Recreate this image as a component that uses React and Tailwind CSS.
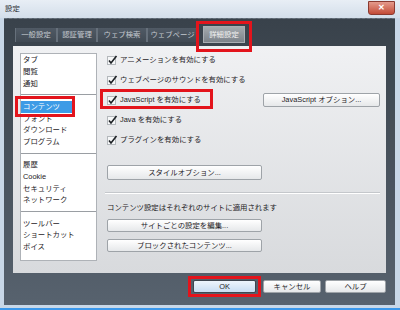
const font = "font-['Liberation_Sans','Noto_Sans_CJK_JP',sans-serif]";

const listGroups = [
  ['タブ', '閲覧', '通知'],
  ['コンテンツ', 'フォント', 'ダウンロード', 'プログラム'],
  ['履歴', 'Cookie', 'セキュリティ', 'ネットワーク'],
  ['ツールバー', 'ショートカット', 'ボイス'],
];

const checks = [
  'アニメーションを有効にする',
  'ウェブページのサウンドを有効にする',
  'JavaScript を有効にする',
  'Java を有効にする',
  'プラグインを有効にする',
];

function Check() {
  return (
    <svg width="11" height="10" viewBox="0 0 11 10" className="shrink-0">
      <rect x="0.5" y="1.5" width="8" height="8" fill="#f6f7f8" stroke="#b4b8bc" />
      <path d="M2 5.5 L4 8 L9.5 1" fill="none" stroke="#1e2226" strokeWidth="1.6" />
    </svg>
  );
}

function Btn({ children, className = '' }) {
  return (
    <div
      className={`flex items-center justify-center rounded-[2px] border border-[#9ea3a8] bg-gradient-to-b from-[#ffffff] to-[#e6e8ea] text-[#1e2226] ${className}`}
    >
      {children}
    </div>
  );
}

function Tab({ label, className }) {
  return (
    <div
      className={`flex h-[14px] items-center justify-center border-x border-[#66707b] bg-gradient-to-b from-[#505a65] to-[#414a54] text-[#c3c8ce] ${className}`}
    >
      {label}
    </div>
  );
}

export default function App() {
  return (
    <div className={`relative flex h-[310px] w-[400px] flex-col overflow-hidden bg-[#c8d7e7] text-[7.4px] leading-none ${font}`}>
      {/* title bar */}
      <div className="flex h-[18px] items-start bg-gradient-to-b from-[#e8eef5] to-[#d3deea]">
        <span className="mt-[5px] ml-[5px] text-[#2a2e33]">設定</span>
        <div className="ml-auto mr-[5px] mt-[1px] flex h-[14px] w-[27px] items-center justify-center rounded-b-[3px] border border-[#8a3a30] bg-gradient-to-b from-[#e49a8c] to-[#c24a36] text-[8px] font-bold text-white">
          ✕
        </div>
      </div>

      {/* dark body */}
      <div className="ml-[4px] mr-[5px] flex h-[287px] flex-col border-t border-dashed border-[#6a747e] bg-gradient-to-b from-[#39424b] to-[#57626e] px-[9px]">
        {/* tabs */}
        <div className="flex h-[27px] items-end pb-[3px] pl-[2px]">
          <Tab label="一般設定" className="mb-[1px] w-[42px]" />
          <Tab label="認証管理" className="mb-[1px] w-[40px]" />
          <Tab label="ウェブ検索" className="mb-[1px] w-[50px]" />
          <Tab label="ウェブページ" className="mb-[1px] w-[51px]" />
          <div className="ml-[5px] flex h-[17px] w-[42px] items-center justify-center border border-[#a9aeb3] bg-gradient-to-b from-[#a4a9ae] to-[#7c838a] text-[#f2f2f2]">
            詳細設定
          </div>
        </div>

        {/* panel */}
        <div className="flex h-[227px] gap-[8px] bg-gradient-to-b from-[#f0f1f3] to-[#d8dadd] pl-[7px] pr-[6px]">
          <div className="mt-[7px] h-[208px] w-[77px] border border-[#aeb2b7] bg-white">
            {listGroups.map((group, gi) => (
              <div key={gi}>
                {gi > 0 && (
                  <div className="flex h-[11.7px] items-center">
                    <div className="h-px w-full bg-[#9a9ea3]" />
                  </div>
                )}
                {group.map((item) => (
                  <div key={item} className="flex h-[11.7px] items-center">
                    {item === 'コンテンツ' ? (
                      <div className="flex h-[12px] w-[52px] items-center bg-[#3d9be6] pl-[2px] text-white">{item}</div>
                    ) : (
                      <span className="pl-[2px] text-[#1e2226]">{item}</span>
                    )}
                  </div>
                ))}
              </div>
            ))}
          </div>

          <div className="flex flex-1 flex-col pt-[4px]">
            {checks.map((c, i) => (
              <div key={c} className="flex h-[20px] items-center pl-[2px] text-[#1e2226]">
                <Check />
                <span className="ml-[2px]">{c}</span>
                {i === 2 && <Btn className="ml-auto h-[14px] w-[117px]">JavaScript オプション...</Btn>}
              </div>
            ))}
            <Btn className="ml-[2px] mt-[15px] h-[15px] w-[155px]">スタイルオプション...</Btn>
            <div className="mt-[12px] h-px bg-[#c4c7cb]" />
            <div className="h-px bg-white" />
            <span className="ml-[2px] mt-[10px] text-[#1e2226]">コンテンツ設定はそれぞれのサイトに適用されます</span>
            <Btn className="ml-[2px] mt-[8px] h-[13px] w-[155px]">サイトごとの設定を編集...</Btn>
            <Btn className="ml-[2px] mt-[7px] h-[13px] w-[155px]">ブロックされたコンテンツ...</Btn>
          </div>
        </div>

        {/* bottom buttons */}
        <div className="mt-[7px] flex justify-end">
          <div className="flex h-[13px] w-[63px] items-center justify-center rounded-[2px] border border-[#3e4650] bg-gradient-to-b from-[#eef5fc] to-[#c9ddf2] text-[#1e2226]">
            OK
          </div>
          <Btn className="ml-[7px] h-[13px] w-[58px]">キャンセル</Btn>
          <Btn className="ml-[4px] h-[13px] w-[61px]">ヘルプ</Btn>
        </div>
      </div>

      {/* bottom frame */}
      <div className="mt-auto h-[2px] bg-[#3a97ea]" />

      {/* red highlight boxes */}
      <div className="pointer-events-none absolute left-[196px] top-[21px] h-[31px] w-[56px] border-[3px] border-[#e3141c]" />
      <div className="pointer-events-none absolute left-[15px] top-[96px] h-[21px] w-[60px] border-[3px] border-[#e3141c]" />
      <div className="pointer-events-none absolute left-[100px] top-[89px] h-[20px] w-[113px] border-[3px] border-[#e3141c]" />
      <div className="pointer-events-none absolute left-[188px] top-[276px] h-[21px] w-[73px] border-[3px] border-[#e3141c]" />
    </div>
  );
}
